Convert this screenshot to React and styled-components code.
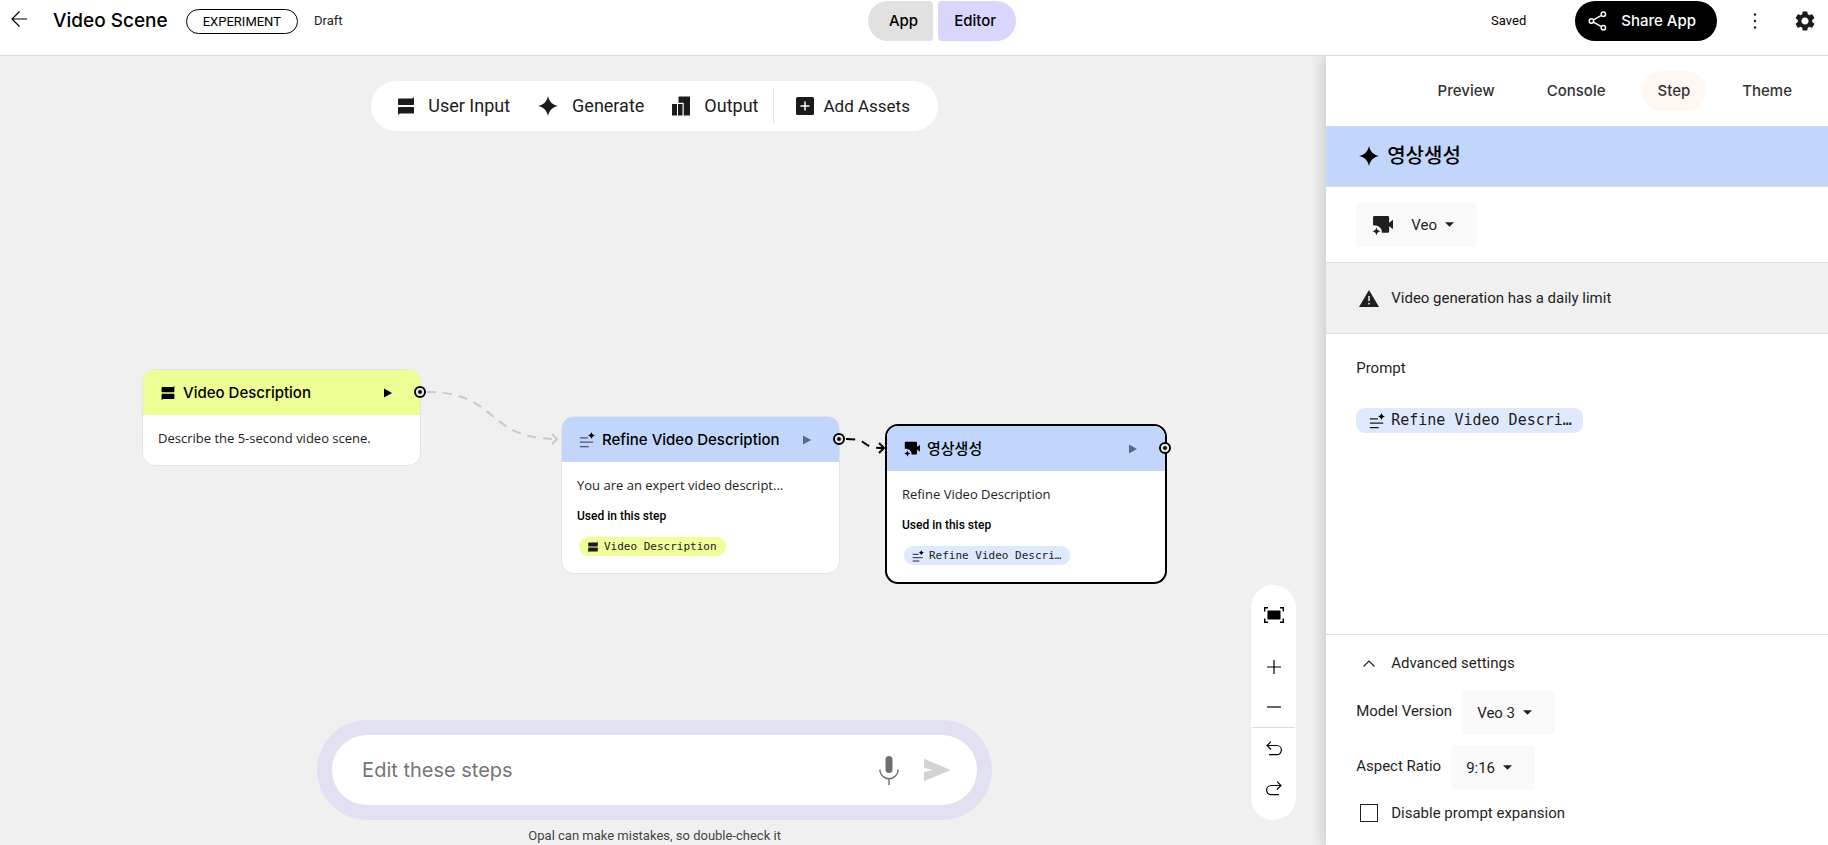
import React from 'react';
import styled, {createGlobalStyle} from 'styled-components';
import {MdSettings} from 'react-icons/md';

const nodes = [
  {
    id: 'describe',
    x: 142,
    y: 313,
    tone: '#edfe94',
    icon: 'input',
    title: 'Video Description',
    text: 'Describe the 5-second video scene.'
  },
  {
    id: 'refine',
    x: 561,
    y: 360,
    tone: '#c2d5fb',
    icon: 'text',
    dim: true,
    title: 'Refine Video Description',
    text: 'You are an expert video descript...',
    used: {icon: 'input', tone: '#f0fe9b', label: 'Video Description'}
  },
  {
    id: 'video',
    x: 885,
    y: 368,
    tone: '#c2d5fb',
    icon: 'video',
    dim: true,
    selected: true,
    lang: 'ko',
    title: '영상생성',
    text: 'Refine Video Description',
    used: {icon: 'text', tone: '#dfe9fe', label: 'Refine Video Descri…'}
  }
];

const icons = {
  back: {box: '0 0 16 16', body: <path d="M8.5 .5 1 8l7.5 7.5M1 8h15" fill="none" stroke="currentColor" strokeWidth="1.2"/>},
  input: {box: '0 0 16 20', body: <path d="M0 3.2Q0 2.5.8 2.5H14Q15.5 2.5 16 .5V8.2Q16 9 15.2 9H.8Q0 9 0 8.2ZM.8 11H15.2Q16 11 16 11.8V16.7Q16 17.5 15.2 17.5H2Q.5 17.5 0 19.5V11.8Q0 11 .8 11Z"/>},
  star: {box: '0 0 20 20', body: <path d="M10 0C11.2 5.6 14.4 8.8 20 10C14.4 11.2 11.2 14.4 10 20C8.8 14.4 5.6 11.2 0 10C5.6 8.8 8.8 5.6 10 0Z"/>},
  output: {box: '0 0 18 20', body: <path d="M0 8.5Q0 8 .5 8H5V19.5H.5Q0 19.5 0 19ZM6 8h4.5v11.5H6ZM6.5 1Q6.5.5 7 .5H17.5Q18 .5 18 1V19Q18 19.5 17.5 19.5H11.7V6.8H6.5Z"/>},
  add: {box: '0 0 18 18', body: <><rect width="18" height="18" rx="1.5"/><path d="M9 4.5v9M4.5 9h9" stroke="#fff" strokeWidth="1.5"/></>},
  text: {box: '0 0 18 18', body: <><path d="M1 6.5h9M1 11.5h15M1 16.5h10" fill="none" stroke="currentColor" strokeWidth="1.4"/><path d="M14 0C14.5 2.2 15.8 3.5 18 4C15.8 4.5 14.5 5.8 14 8C13.5 5.8 12.2 4.5 10 4C12.2 3.5 13.5 2.2 14 0Z" fill="#000"/></>},
  video: {box: '0 0 20 20', body: <path d="M2.2 1H15Q16.3 1 16.3 2.3V7.4L20 4.6V13.4L16.3 10.6V15.7Q16.3 17 15 17H9.4C9.8 12.8 6.4 9.6 1 9.8V2.2Q1 1 2.2 1ZM4.3 11.6C4.8 14 5.7 15 8.1 15.5C5.7 16 4.8 17 4.3 19.6C3.8 17 2.6 16 .3 15.5C2.6 15 3.8 14 4.3 11.6Z"/>},
  share: {box: '0 0 20 21', body: <g fill="none" stroke="currentColor" strokeWidth="1.6"><circle cx="3.6" cy="10.5" r="2.3"/><circle cx="16.2" cy="3.4" r="2.3"/><circle cx="16.2" cy="17.6" r="2.3"/><path d="M5.6 9.3 14.2 4.5M5.6 11.7l8.6 4.8"/></g>},
  dots: {box: '0 0 4 18', body: <><circle cx="2" cy="2.5" r="1.2"/><circle cx="2" cy="9" r="1.2"/><circle cx="2" cy="15.5" r="1.2"/></>},
  play: {box: '0 0 8 10', body: <path d="M0 .5 8 5 0 9.5Z"/>},
  caret: {box: '0 0 10 5', body: <path d="M0 0h10L5 5Z"/>},
  warning: {box: '0 0 20 17', body: <><path d="M10 0 20 17H0Z"/><path d="M10 6v5M10 12.8v1.6" stroke="#f0f0f0" strokeWidth="1.5"/></>},
  chevron: {box: '0 0 12 7', body: <path d="M.5 6.5 6 1l5.5 5.5" fill="none" stroke="currentColor" strokeWidth="1.2"/>},
  fit: {box: '0 0 20 16', body: <><rect x="3.5" y="3.5" width="13" height="9"/><path d="M.7 4.5V.7H4M16 .7h3.3v3.8M19.3 11.5v3.8H16M4 15.3H.7v-3.8" fill="none" stroke="currentColor" strokeWidth="1.4"/></>},
  plus: {box: '0 0 14 14', body: <path d="M7 0v14M0 7h14" stroke="currentColor" strokeWidth="1.2"/>},
  minus: {box: '0 0 14 14', body: <path d="M0 7h14" stroke="currentColor" strokeWidth="1.2"/>},
  undo: {box: '0 0 16 15', body: <path d="M5 .6 1 4.5l4 4M1 4.5h9.8a4.6 4.6 0 0 1 0 9.2H3" fill="none" stroke="currentColor" strokeWidth="1.2"/>},
  redo: {box: '0 0 16 15', body: <path d="m11 .6 4 3.9-4 4M15 4.5H5.2a4.6 4.6 0 0 0 0 9.2H13" fill="none" stroke="currentColor" strokeWidth="1.2"/>},
  mic: {box: '0 0 20 29', body: <><rect x="6.5" y="0" width="7" height="17" rx="3.5"/><path d="M.8 13.5a9.2 9.2 0 0 0 18.4 0M10 22.5V29" fill="none" stroke="currentColor" strokeWidth="1.4"/></>},
  send: {box: '0 0 26 22', body: <path d="M.5.5 25.5 11 .5 21.5V13.5L11 11 .5 8.5Z" stroke="currentColor" strokeLinejoin="round"/>}
};

function Icon({name, width, height}) {
  const {box, body} = icons[name];
  return <Svg viewBox={box} width={width} height={height || width} aria-hidden="true">{body}</Svg>;
}

function StepNode({node}) {
  const {x, y, tone, icon, title, text, used, selected, dim, lang} = node;
  return (
    <Node $x={x} $y={y} $selected={selected}>
      <NodeHeader $tone={tone}>
        <NodeIcon $muted={icon === 'text'}><Icon name={icon} width={16}/></NodeIcon>
        <NodeTitle lang={lang}>{title}</NodeTitle>
        <PlayButton $dim={dim} aria-label="Run step"><Icon name="play" width={8} height={10}/></PlayButton>
      </NodeHeader>
      <NodeBody>
        <NodeText>{text}</NodeText>
        {used && <UsedLabel>Used in this step</UsedLabel>}
        {used && <Chip $tone={used.tone}><Icon name={used.icon} width={12}/>{used.label}</Chip>}
      </NodeBody>
      <Port/>
    </Node>
  );
}

function Picker({id, icon, value}) {
  return (
    <PickerWrap>
      {icon && <PickerIcon><Icon name={icon} width={21}/></PickerIcon>}
      <PickerSelect id={id} $icon={icon} aria-label={icon ? 'Model' : undefined} defaultValue={value}>
        <option>{value}</option>
      </PickerSelect>
      <PickerCaret><Icon name="caret" width={9} height={5}/></PickerCaret>
    </PickerWrap>
  );
}

export default function App() {
  return (
    <Page>
      <GlobalStyle/>
      <Header>
        <HeaderLeft>
          <BackButton aria-label="Back"><Icon name="back" width={16}/></BackButton>
          <AppTitle>Video Scene</AppTitle>
          <Badge>EXPERIMENT</Badge>
          <Status>Draft</Status>
        </HeaderLeft>
        <Modes>
          <ModeButton $side="left">App</ModeButton>
          <ModeButton $side="right" $active>Editor</ModeButton>
        </Modes>
        <HeaderRight>
          <SavedStatus>Saved</SavedStatus>
          <ShareButton><Icon name="share" width={19} height={20}/>Share App</ShareButton>
          <IconButton aria-label="More"><Icon name="dots" width={4} height={18}/></IconButton>
          <IconButton aria-label="Settings"><MdSettings size={24}/></IconButton>
        </HeaderRight>
      </Header>
      <Main>
        <Canvas>
          <Board>
            <Edges>
              <g stroke="#c8c8c8">
                <path d="M427 336C500 336 484 383 557 383" strokeDasharray="9 7"/>
                <path d="m552 378 5 5-5 5"/>
              </g>
              <g stroke="#000">
                <path d="M846 383C872 383 858 392 884 392" strokeDasharray="9 7"/>
                <path d="m879 387 5 5-5 5"/>
              </g>
            </Edges>
            {nodes.map(node => <StepNode key={node.id} node={node}/>)}
          </Board>
          <Toolbar>
            <Tool><Icon name="input" width={16} height={20}/>User Input</Tool>
            <Tool><Icon name="star" width={20}/>Generate</Tool>
            <Tool><Icon name="output" width={18} height={20}/>Output</Tool>
            <ToolDivider/>
            <Tool $tight><Icon name="add" width={18}/>Add Assets</Tool>
          </Toolbar>
          <Composer>
            <ChatFrame>
              <ChatBox>
                <ChatInput aria-label="Edit these steps" placeholder="Edit these steps"/>
                <ChatButton $color="#6e6e6e" aria-label="Dictate"><Icon name="mic" width={20} height={29}/></ChatButton>
                <ChatButton $color="#d3d3d3" aria-label="Send"><Icon name="send" width={26} height={22}/></ChatButton>
              </ChatBox>
            </ChatFrame>
            <Disclaimer>Opal can make mistakes, so double-check it</Disclaimer>
          </Composer>
          <ZoomBar>
            <ZoomButton $first aria-label="Zoom to fit"><Icon name="fit" width={20} height={16}/></ZoomButton>
            <ZoomButton aria-label="Zoom in"><Icon name="plus" width={14}/></ZoomButton>
            <ZoomButton aria-label="Zoom out"><Icon name="minus" width={14}/></ZoomButton>
            <ZoomDivider/>
            <ZoomButton aria-label="Undo"><Icon name="undo" width={16} height={15}/></ZoomButton>
            <ZoomButton aria-label="Redo"><Icon name="redo" width={16} height={15}/></ZoomButton>
          </ZoomBar>
        </Canvas>
        <Sidebar>
          <Tabs role="tablist">
            {['Preview', 'Console', 'Step', 'Theme'].map(tab =>
              <Tab key={tab} role="tab" aria-selected={tab === 'Step'}>{tab}</Tab>
            )}
          </Tabs>
          <StepTitle>
            <Lead><Icon name="star" width={20}/></Lead>
            <h2 lang="ko">영상생성</h2>
          </StepTitle>
          <ModelRow><Picker icon="video" value="Veo"/></ModelRow>
          <Notice>
            <Lead><Icon name="warning" width={20} height={17}/></Lead>
            Video generation has a daily limit
          </Notice>
          <Prompt>
            <PromptLabel>Prompt</PromptLabel>
            <Chip $large $tone="#dfe9fe"><Icon name="text" width={16}/>Refine Video Descri…</Chip>
          </Prompt>
          <Advanced>
            <AdvancedToggle aria-expanded="true">
              <Lead><Icon name="chevron" width={12} height={7}/></Lead>
              Advanced settings
            </AdvancedToggle>
            <Field>
              <FieldLabel htmlFor="version">Model Version</FieldLabel>
              <Picker id="version" value="Veo 3"/>
            </Field>
            <Field>
              <FieldLabel htmlFor="ratio">Aspect Ratio</FieldLabel>
              <Picker id="ratio" value="9:16"/>
            </Field>
            <CheckRow>
              <Lead><CheckBox type="checkbox"/></Lead>
              Disable prompt expansion
            </CheckRow>
          </Advanced>
        </Sidebar>
      </Main>
    </Page>
  );
}

const GlobalStyle = createGlobalStyle`
  * {
    box-sizing: border-box;
  }
  body {
    margin: 0;
    background: #fff;
    color: #000;
    font-family: Roboto, 'Noto Sans CJK KR', sans-serif;
    font-size: 15px;
    line-height: 20px;
  }
  h1, h2, h3, p {
    margin: 0;
  }
  button, input, select {
    margin: 0;
    padding: 0;
    border: 0;
    background: none;
    color: inherit;
    font: inherit;
  }
  button, select {
    cursor: pointer;
  }
`;
const headingFont = "Inter, 'Noto Sans CJK KR', sans-serif";
const Svg = styled.svg`
  display: block;
  flex: none;
  fill: currentColor;
`;
const Page = styled.div`
  display: flex;
  flex-direction: column;
  min-height: 100vh;
`;

const Header = styled.header`
  position: relative;
  z-index: 2;
  display: grid;
  grid-template-columns: minmax(0, 31fr) auto minmax(0, 29fr);
  padding: 1px 0 14px;
  border-bottom: 1px solid #dedede;
  background: #fff;
`;
const HeaderLeft = styled.div`
  display: flex;
  align-items: center;
  gap: 16px;
  padding-left: 11px;
`;
const BackButton = styled.button`
  width: 26px;
  height: 20px;
  display: flex;
  align-items: flex-start;
`;
const AppTitle = styled.h1`
  padding-right: 2px;
  font-family: ${headingFont};
  font-size: 19px;
  font-weight: 500;
  line-height: 24px;
`;
const Badge = styled.span`
  padding: 0 16px;
  border: 1px solid #000;
  border-radius: 13px;
  font-size: 13px;
  line-height: 23px;
`;
const Status = styled.span`
  font-size: 13px;
  color: #222;
`;
const Modes = styled.div`
  display: flex;
  gap: 5px;
`;
const ModeButton = styled.button`
  height: 40px;
  padding: ${props => props.$side === 'left' ? '0 15px 0 21px' : '0 20px 0 16px'};
  border-radius: ${props => props.$side === 'left' ? '20px 4px 4px 20px' : '4px 20px 20px 4px'};
  background: ${props => props.$active ? '#d9d6fe' : '#e1e1e1'};
  font-family: ${headingFont};
  font-size: 15px;
  font-weight: 500;
`;
const HeaderRight = styled.div`
  display: flex;
  align-items: center;
  justify-content: flex-end;
  gap: 26px;
  padding-right: 11px;
`;
const SavedStatus = styled.span`
  margin-right: 23px;
  font-size: 13px;
`;
const ShareButton = styled.button`
  display: flex;
  align-items: center;
  gap: 14px;
  height: 40px;
  padding: 0 21px 0 13px;
  border-radius: 20px;
  background: #000;
  color: #fff;
  font-family: ${headingFont};
  font-size: 15px;
  font-weight: 500;
`;
const IconButton = styled.button`
  display: flex;
  align-items: center;
  justify-content: center;
  width: 24px;
  height: 24px;
  color: #1b1b1b;
`;

const Main = styled.main`
  flex: 1;
  display: grid;
  grid-template-columns: minmax(0, 1fr) 27.45%;
`;
const Canvas = styled.section`
  position: relative;
  display: flex;
  flex-direction: column;
  align-items: center;
  justify-content: space-between;
  padding: 25px 17px 1px 0;
  background: #f0f0f0;
`;
const Board = styled.div`
  position: absolute;
  inset: 0;
  overflow: hidden;
`;
const Edges = styled.svg`
  display: block;
  width: 100%;
  height: 100%;
  fill: none;
  stroke-width: 2px;
`;
const Toolbar = styled.div`
  position: relative;
  display: flex;
  align-items: center;
  height: 50px;
  padding: 0 28px 0 27px;
  border-radius: 25px;
  background: #fff;
`;
const Tool = styled.button`
  display: flex;
  align-items: center;
  gap: ${props => props.$tight ? '9px' : '14px'};
  padding-right: ${props => props.$tight ? '0' : '28px'};
  color: #1b1b1b;
  font-size: ${props => props.$tight ? '17px' : '18px'};
  &:nth-of-type(3) {
    padding-right: 15px;
  }
`;
const ToolDivider = styled.span`
  width: 1px;
  height: 34px;
  margin-right: 22px;
  background: #e3e3e3;
`;

const Node = styled.article`
  position: absolute;
  left: ${props => props.$x}px;
  top: ${props => props.$y}px;
  width: ${props => props.$selected ? 282 : 279}px;
  border: ${props => props.$selected ? '2px solid #000' : '1px solid #e4e4e4'};
  border-radius: 13px;
  background: #fff;
`;
const NodeHeader = styled.header`
  display: flex;
  align-items: center;
  gap: 6px;
  height: 45px;
  padding: 0 28px 0 16px;
  border-radius: 11px 11px 0 0;
  background: ${props => props.$tone};
`;
const NodeIcon = styled.span`
  display: flex;
  justify-content: center;
  width: 18px;
  color: ${props => props.$muted ? '#4a5470' : '#000'};
`;
const NodeTitle = styled.h3`
  flex: 1;
  font-family: ${headingFont};
  font-size: 15px;
  font-weight: 500;
`;
const PlayButton = styled.button`
  color: ${props => props.$dim ? '#5d6886' : '#000'};
`;
const NodeBody = styled.div`
  display: flex;
  flex-direction: column;
  align-items: flex-start;
  gap: 13px;
  padding: 13px 15px 17px;
`;
const NodeText = styled.p`
  font-family: 'Open Sans', sans-serif;
  font-size: 13px;
  color: #222;
`;
const UsedLabel = styled.p`
  font-size: 12px;
  font-weight: 500;
  line-height: 16px;
`;
const Chip = styled.span`
  display: inline-flex;
  align-items: center;
  gap: ${props => props.$large ? '6px' : '5px'};
  margin-left: ${props => props.$large ? '0' : '2px'};
  padding: ${props => props.$large ? '0 11px 0 13px' : '0 9px 0 8px'};
  border-radius: 9px;
  background: ${props => props.$tone};
  color: #1b1b1b;
  font-family: 'DejaVu Sans Mono', monospace;
  font-size: ${props => props.$large ? '15px' : '11px'};
  line-height: ${props => props.$large ? '25px' : '19px'};
`;
const Port = styled.span`
  position: absolute;
  top: 16px;
  right: -6px;
  width: 12px;
  height: 12px;
  border: 2px solid #000;
  border-radius: 50%;
  background: radial-gradient(#000 1px, #fff 3px);
`;

const Composer = styled.div`
  position: relative;
  width: 100%;
  max-width: 675px;
`;
const ChatFrame = styled.div`
  padding: 15px;
  border-radius: 50px;
  background: #e2e1f1;
`;
const ChatBox = styled.div`
  display: flex;
  align-items: center;
  gap: 25px;
  height: 70px;
  padding: 0 27px 0 30px;
  border-radius: 35px;
  background: #fff;
`;
const ChatInput = styled.input`
  flex: 1;
  min-width: 0;
  height: 40px;
  outline: none;
  font-family: ${headingFont};
  font-size: 20px;
  &::placeholder {
    color: #757575;
    opacity: 1;
  }
`;
const ChatButton = styled.button`
  color: ${props => props.$color};
`;
const Disclaimer = styled.p`
  margin-top: 8px;
  color: #444;
  font-size: 13px;
  line-height: 16px;
  text-align: center;
`;
const ZoomBar = styled.div`
  position: absolute;
  right: 30px;
  bottom: 25px;
  width: 45px;
  padding: 10px 1px 12px;
  border-radius: 23px;
  background: #fff;
`;
const ZoomButton = styled.button`
  display: flex;
  align-items: center;
  justify-content: center;
  width: 100%;
  height: 40px;
  margin-bottom: ${props => props.$first ? '12px' : '0'};
`;
const ZoomDivider = styled.div`
  height: 1px;
  background: #dedede;
`;

const Sidebar = styled.aside`
  position: relative;
  z-index: 1;
  display: flex;
  flex-direction: column;
  background: #fff;
  box-shadow: -2px 0 12px 2px rgba(0, 0, 0, .14);
  color: #1f1f1f;
`;
const Tabs = styled.div`
  display: flex;
  justify-content: flex-end;
  gap: 20px;
  padding: 15px 20px;
`;
const Tab = styled.button`
  height: 40px;
  padding: 0 16px;
  border-radius: 20px;
  color: #333;
  font-family: ${headingFont};
  font-size: 15px;
  font-weight: 500;
  &[aria-selected='true'] {
    background: #fff7f2;
  }
`;
const Lead = styled.span`
  display: flex;
  flex: none;
  justify-content: center;
  width: 25px;
  margin-right: 10px;
`;
const StepTitle = styled.div`
  display: flex;
  align-items: center;
  height: 61px;
  padding: 0 30px;
  border-bottom: 1px solid #dedede;
  background: #c2d5fb;
  color: #000;
  h2 {
    font-size: 20px;
    font-weight: 500;
  }
  ${Lead} {
    margin-right: 6px;
  }
`;
const ModelRow = styled.div`
  padding: 15px 30px;
  border-bottom: 1px solid #dedede;
`;
const PickerWrap = styled.span`
  position: relative;
  display: inline-flex;
  height: 45px;
  border-radius: 4px;
  background: #f9f9f9;
`;
const PickerSelect = styled.select`
  appearance: none;
  padding: 0 40px 0 ${props => props.$icon ? '55px' : '15px'};
  border-radius: 4px;
`;
const PickerIcon = styled.span`
  position: absolute;
  top: 13px;
  left: 16px;
  pointer-events: none;
`;
const PickerCaret = styled.span`
  position: absolute;
  top: 20px;
  right: 23px;
  pointer-events: none;
`;
const Notice = styled.div`
  display: flex;
  align-items: center;
  height: 71px;
  padding: 0 30px;
  border-bottom: 1px solid #dedede;
  background: #f0f0f0;
`;
const Prompt = styled.div`
  flex: 1;
  padding: 24px 30px;
`;
const PromptLabel = styled.h3`
  margin-bottom: 30px;
  font-size: 15px;
  font-weight: 400;
`;
const Advanced = styled.div`
  display: flex;
  flex-direction: column;
  align-items: flex-start;
  padding: 18px 30px 22px;
  border-top: 1px solid #dedede;
`;
const AdvancedToggle = styled.button`
  display: flex;
  align-items: center;
  margin-bottom: 17px;
`;
const Field = styled.div`
  display: flex;
  align-items: center;
  gap: 10px;
  margin-bottom: 10px;
`;
const FieldLabel = styled.label`
  padding-bottom: 4px;
`;
const CheckRow = styled.label`
  display: flex;
  align-items: center;
  margin-top: 3px;
`;
const CheckBox = styled.input`
  appearance: none;
  width: 18px;
  height: 18px;
  border: 1px solid #1f1f1f;
  &:checked {
    background: #1f1f1f;
  }
`;
